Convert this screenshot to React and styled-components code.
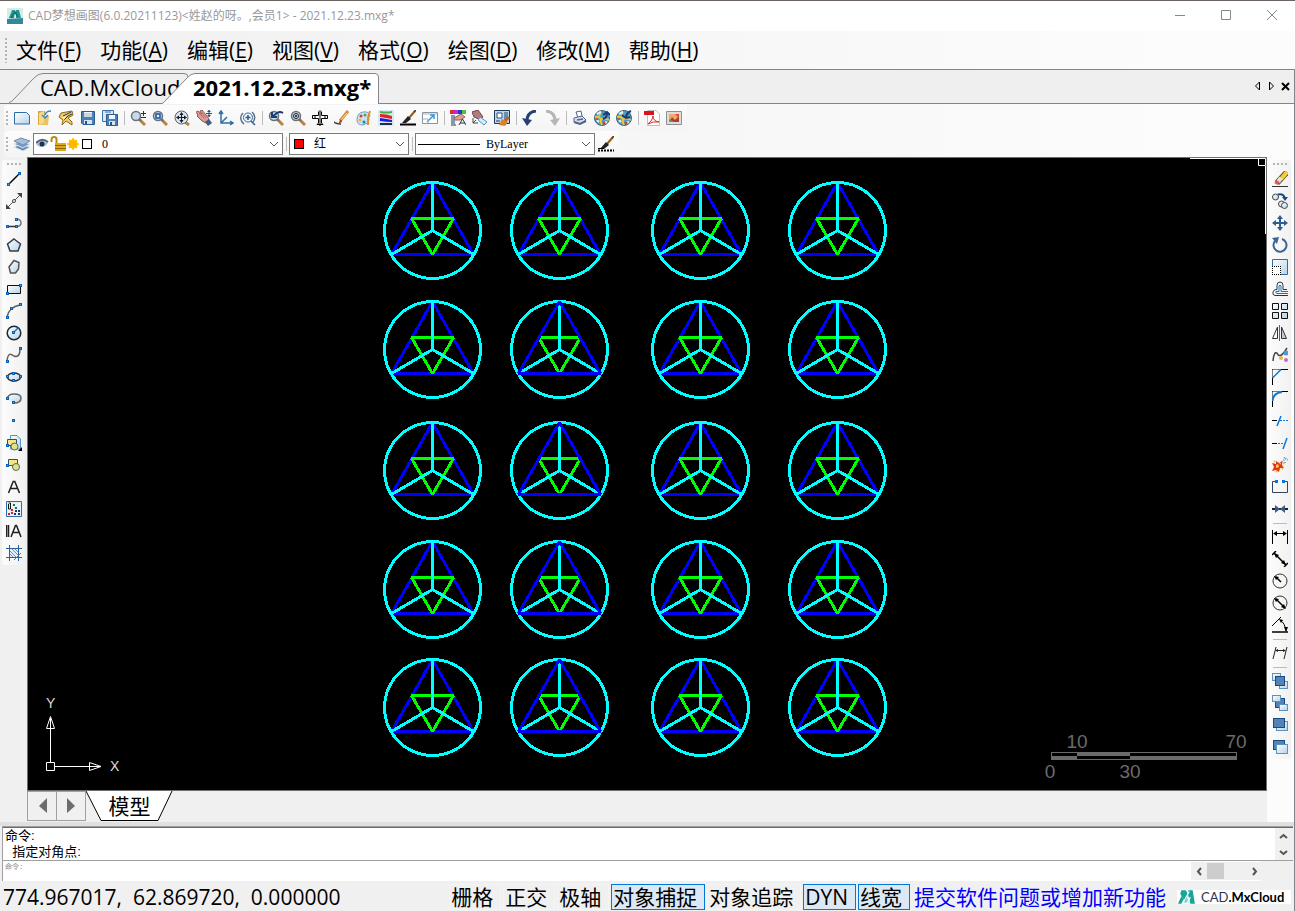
import React from "react";
import styled, { createGlobalStyle, css } from "styled-components";

const GlobalStyle = createGlobalStyle`
  * { box-sizing: border-box; }
  html, body, #root { height: 100%; }
  body {
    margin: 0;
    background: #f0f0f0;
    color: #000;
    font-family: "Open Sans", "Noto Sans CJK SC", sans-serif;
    text-spacing-trim: space-all;
  }
  button, input, select { font: inherit; color: inherit; }
`;

const buttonReset = css`
  margin: 0;
  padding: 0;
  border: 0;
  background: none;
`;

const Window = styled.div`
  display: flex;
  flex-direction: column;
  min-height: 100vh;
  border-top: 1px solid #6b6360;
`;

/* ---------- title bar ---------- */

const TitleBar = styled.header`
  display: flex;
  align-items: center;
  height: 30px;
  padding: 0 12px 0 7px;
  gap: 5px;
  background: #fff;
`;

const Title = styled.h1`
  flex: 1;
  margin: 0;
  font-size: 12px;
  font-weight: 400;
  line-height: 16px;
  color: #999;
  white-space: nowrap;
`;

const WindowControls = styled.div`
  display: flex;
  gap: 24px;
`;

const WindowButton = styled.button`
  ${buttonReset}
  display: flex;
  align-items: center;
  justify-content: center;
  width: 22px;
  height: 22px;
`;

/* ---------- menu ---------- */

const Grip = styled.span`
  flex: none;
  width: 7px;
  height: ${(p) => p.$size}px;
  background: radial-gradient(circle, #b4b4b4 1px, transparent 1px) 0 0 / 6px 4px repeat-y;
`;

const MenuBar = styled.nav`
  display: flex;
  align-items: center;
  height: 39px;
  padding-left: 3px;
  border-bottom: 1px solid #84848c;
  background: linear-gradient(90deg, #f0f0f0, #fcfcfc 92%);
`;

const MenuItem = styled.button`
  ${buttonReset}
  padding: 0 6px;
  font-size: 21px;
  line-height: 30px;
  white-space: nowrap;
`;

const MenuItems = styled.div`
  display: flex;
  gap: 7px;
`;

/* ---------- document tabs ---------- */

const Workspace = styled.div`
  flex: 1;
  display: flex;
  flex-direction: column;
  border-right: 1px solid #84848c;
`;

const TabBar = styled.div`
  display: flex;
  align-items: flex-end;
  height: 34px;
  padding-left: 9px;
  border-bottom: 1px solid #84848c;
  background: #efefef;
`;

const Tab = styled.button`
  ${buttonReset}
  position: relative;
  flex: none;
  width: ${(p) => p.$width}px;
  height: 31px;
  margin: 0 0 -1px ${(p) => (p.$active ? "-27px" : "0")};
  padding: 0 0 3px 31px;
  font-size: 22px;
  font-weight: ${(p) => (p.$active ? 700 : 400)};
  line-height: 28px;
  text-align: left;
  white-space: nowrap;
`;

const TabShape = styled.svg`
  position: absolute;
  inset: 0;
`;

const TabLabel = styled.span`
  position: relative;
`;

const TabNav = styled.div`
  display: flex;
  margin-left: auto;
  padding: 0 2px 10px 0;
`;

const TabNavButton = styled.button`
  ${buttonReset}
  display: flex;
  align-items: center;
  justify-content: center;
  width: 14px;
  height: 14px;
`;

/* ---------- toolbars ---------- */

const ToolbarDock = styled.div`
  padding-top: 1px;
  background: linear-gradient(90deg, #f0f0f0, #fcfcfc 92%);
`;

const Toolbar = styled.div`
  display: flex;
  align-items: center;
  width: max-content;
  height: 26px;
  margin-left: 4px;
  padding-right: 2px;
  border-radius: 3px;
  background: linear-gradient(180deg, #fcfcfc, #f4f4f4);
`;

const SideDock = styled.aside`
  padding: 3px ${(p) => (p.$right ? 3 : 2)}px 0 2px;
  background: ${(p) => (p.$right ? "#fcfcfc" : "#f0f0f0")};
`;

const SideToolbar = styled.div`
  display: flex;
  flex-direction: column;
  align-items: center;
  padding-bottom: 1px;
  border-radius: 3px;
  background: linear-gradient(90deg, #fcfcfc, #f1f1f1);
`;

const SideGrip = styled.span`
  width: 16px;
  height: 8px;
  background: radial-gradient(circle, #b4b4b4 1px, transparent 1px) 0 2px / 4px 4px repeat-x;
`;

const ToolButton = styled.button`
  ${buttonReset}
  display: flex;
  flex: none;
  align-items: center;
  justify-content: center;
  width: 22px;
  height: 22px;
  &:hover { background: #dbe9f6; }
`;

const Divider = styled.span`
  flex: none;
  display: flex;
  align-items: center;
  justify-content: center;
  width: ${(p) => (p.$horizontal ? 22 : 6)}px;
  height: ${(p) => (p.$horizontal ? 6 : 22)}px;
  &::after {
    content: "";
    width: ${(p) => (p.$horizontal ? 14 : 1)}px;
    height: ${(p) => (p.$horizontal ? 1 : 14)}px;
    background: #bcbcbc;
  }
`;

const Combo = styled.label`
  position: relative;
  display: flex;
  align-items: center;
  width: ${(p) => p.$width}px;
  height: 22px;
  border: 1px solid #7a7a7a;
  background: #fff;
`;

const ComboSelect = styled.select`
  appearance: none;
  width: 100%;
  height: 20px;
  padding: 0 20px 0 ${(p) => p.$indent}px;
  border: 0;
  border-radius: 0;
  outline: 0;
  background: transparent;
  font-family: "Liberation Serif", "Noto Sans CJK SC", serif;
  font-size: 12px;
`;

const ComboArt = styled.svg`
  position: absolute;
  left: 2px;
  pointer-events: none;
`;

const ComboArrow = styled.svg`
  position: absolute;
  right: 2px;
  pointer-events: none;
`;

/* ---------- drawing area ---------- */

const Main = styled.main`
  flex: 1;
  display: grid;
  grid-template-columns: 27px minmax(0, 1fr) 27px;
`;

const Center = styled.section`
  display: flex;
  flex-direction: column;
  min-width: 0;
`;

const Viewport = styled.div`
  position: relative;
  flex: 1;
  min-height: 480px;
  overflow: hidden;
  border: 1px solid #6e6e6e;
  background: #000;
`;

const Drawing = styled.svg`
  position: absolute;
  inset: 0;
  width: 100%;
  height: 100%;
`;

const UcsIcon = styled.svg`
  position: absolute;
  left: 17px;
  bottom: 10px;
`;

const ScaleBar = styled.svg`
  position: absolute;
  right: 17px;
  bottom: 5px;
`;

const CornerBox = styled.svg`
  position: absolute;
  top: 0;
  right: 0;
`;

const LayoutTabs = styled.div`
  display: flex;
  align-items: flex-start;
  height: 31px;
  background: #f0f0f0;
`;

const LayoutNavButton = styled.button`
  ${buttonReset}
  display: flex;
  align-items: center;
  justify-content: center;
  width: ${(p) => (p.$first ? 30 : 29)}px;
  height: 30px;
  border: 1px solid #a0a0a0;
  border-left-width: ${(p) => (p.$first ? 1 : 0)}px;
`;

const LayoutTab = styled.button`
  ${buttonReset}
  position: relative;
  width: 87px;
  height: 30px;
  font-size: 21px;
  line-height: 30px;
  text-align: center;
`;

/* ---------- command line ---------- */

const Splitter = styled.div`
  height: 4px;
  background: #e0e0e0;
`;

const CommandPanel = styled.section`
  margin: 0 1px 0 2px;
  border: 1px solid #a0a0a0;
  border-width: 1px 0 0 1px;
  font-family: "Liberation Mono", "Noto Sans CJK SC", monospace;
`;

const History = styled.div`
  display: flex;
  justify-content: space-between;
  height: 34px;
  border-top: 1px solid #696969;
  border-bottom: 1px solid #a0a0a0;
  background: #fff;
`;

const HistoryText = styled.div`
  padding-left: 2px;
  font-family: "Liberation Sans", "Noto Sans CJK SC", sans-serif;
  font-size: 13px;
  line-height: 16px;
  white-space: pre;
`;

const VerticalScroll = styled.div`
  display: flex;
  flex-direction: column;
  width: 18px;
  background: #f0f0f0;
`;

const HorizontalScroll = styled.div`
  display: flex;
  align-items: center;
  width: 71px;
  height: 18px;
  margin-right: 31px;
  background: #f0f0f0;
`;

const ScrollButton = styled.button`
  ${buttonReset}
  display: flex;
  align-items: center;
  justify-content: center;
  width: 16px;
  height: 16px;
`;

const ScrollThumb = styled.span`
  width: 17px;
  height: 16px;
  margin-right: auto;
  background: #cdcdcd;
`;

const CommandRow = styled.div`
  display: flex;
  align-items: center;
  height: 20px;
  background: linear-gradient(270deg, #f0f0f0 32px, #fff 32px);
`;

const CommandInput = styled.input`
  flex: 1;
  min-width: 0;
  height: 20px;
  padding: 0 0 10px 2px;
  border: 0;
  outline: 0;
  background: transparent;
  font-size: 7px;
  color: #8e8791;
`;

/* ---------- status bar ---------- */

const StatusBar = styled.footer`
  display: flex;
  align-items: center;
  gap: 2px;
  height: 30px;
  padding: 1px 3px 0 3px;
  background: #f0f0f0;
  font-size: 21px;
  line-height: 24px;
  white-space: nowrap;
`;

const Coordinates = styled.output`
  flex: 1;
  white-space: pre;
`;

const StatusToggle = styled.button`
  ${buttonReset}
  height: 26px;
  padding: 0 7px 0 1px;
  border: 1px solid ${(p) => (p.$on ? "#0078d7" : "#f4f4f4")};
  background: ${(p) => (p.$on ? "#dce9f5" : "transparent")};
`;

const StatusLink = styled.a`
  width: 263px;
  padding-left: 2px;
  color: #00f;
  text-decoration: none;
`;

const Brand = styled.div`
  display: flex;
  align-items: center;
  gap: 5px;
  width: 114px;
  height: 14px;
  padding-left: 1px;
  background: #fff;
  font-family: Lato, "Open Sans", sans-serif;
  font-size: 13px;
  font-weight: 700;
  line-height: 14px;
`;

const BrandPrefix = styled.span`
  color: #2c3556;
  font-weight: 400;
`;

/* ---------- icons ---------- */

const BLUE = "#0a78d6";
const STEEL = "#2f6da8";

const Node = ({ x, y }) => (
  <>
    <rect x={x - 1} y={y - 1} width="3" height="3" fill="#0a5fb4" />
    <rect x={x} y={y} width="1" height="1" fill="#35a4f4" />
  </>
);

const Lens = ({ x = 6, y = 6, children }) => (
  <>
    <path d={`M${x + 3} ${y + 3}l6 6`} stroke="#b98242" strokeWidth="3" />
    <path d={`M${x + 3} ${y + 3}l2 2`} stroke="#66707c" strokeWidth="2" />
    <circle cx={x} cy={y} r="4.5" fill="#c9d9e8" stroke="#68727e" strokeWidth="1.5" />
    {children}
  </>
);

const Brush = () => (
  <>
    <path d="M15 1L9 8" stroke="#9a5a1c" strokeWidth="2" />
    <path d="M14.500 .5l1 1" stroke="#5f300c" strokeWidth="3" />
    <path d="M8 6L11 9L6 13L2 13z" fill="#222" />
  </>
);

const Sheet = ({ x, y, w, h, front }) => (
  <rect x={x + 0.5} y={y + 0.5} width={w} height={h} fill={front ? "#5483b5" : "url(#paper)"} stroke={front ? "#174b83" : "#5b93bf"} />
);

const Globe = ({ children }) => (
  <>
    <circle cx="8" cy="8" r="7.5" fill="#4f9fc6" stroke="#37627e" />
    <path d="M1 7Q5 6 7 9Q6 12 8 15" stroke="#f3c72f" strokeWidth="2" />
    <path d="M7 9Q11 8 15 10M6 1Q7 4 5 6" stroke="#f3c72f" strokeWidth="1.5" />
    <path d="M3 4L7 2M10 13L13 12M3 10L5 12" stroke="#e3f0f4" strokeWidth="2" />
    <circle cx="10" cy="13" r="1.5" fill="#dc3c1e" />
    <circle cx="3" cy="9" r="1" fill="#dc3c1e" />
    {children}
  </>
);

const ICONS = {
  new: <path d="M.5 2.500H12.500L15.500 5.500V14H.5z" fill="url(#paper)" stroke={STEEL} />,
  open: (
    <>
      <path d="M2 1H9V15H2z" fill="#d9a441" />
      <path d="M3 3L8 1V14L3 15z" fill="#f8d98a" />
      <path d="M8 6H13L12 15H5L8 12z" fill="#edc063" />
      <path d="M15 1Q10 1 9 5M6 5L9 8L12 5" stroke="#2f8bd6" strokeWidth="1.500" />
    </>
  ),
  openCloud: (
    <>
      <path d="M3 3L14 1L15 5L10 8L14 12L14 15L8 11L4 15L5 10L1 7z" fill="#f0c964" stroke="#8a6a24" />
      <path d="M5 6L13 2M6 10L10 6L14 4" stroke="#1c3b6b" />
      <path d="M4 7L8 6L6 10z" fill="#fbeeb8" />
    </>
  ),
  save: (
    <>
      <path d="M1.500 1.500H14.500V14.500H3L1.500 13z" fill="#4f80b5" stroke="#2c5b92" />
      <path d="M4 2H12V7H4z" fill="#eef5fb" />
      <path d="M4 4H12M4 6H12" stroke="#9cb9d3" />
      <path d="M4 10H12V14H4z" fill="#d6e3ef" />
      <path d="M5 11H7V14H5z" fill="#24548a" />
    </>
  ),
  saveAs: (
    <>
      <path d="M.5 .5H11.500V11.500H.5z" fill="#dbe8f4" stroke="#3b71a8" />
      <path d="M4.500 4.500H15.500V15.500H4.500z" fill="#4f80b5" stroke="#2c5b92" />
      <path d="M7 5H13V9H7z" fill="#eef5fb" />
      <path d="M7 11H13V15H7z" fill="#d6e3ef" />
      <path d="M8 12H10V15H8z" fill="#24548a" />
      <path d="M3 2H9" stroke="#3b71a8" />
    </>
  ),
  zoom: (
    <>
      <Lens />
      <path d="M11 3.500H16M13.500 1V6M11 7.500H16" stroke="#24344c" />
    </>
  ),
  zoomWindow: <Lens><rect x="4" y="4" width="4" height="4" fill="#dbeeff" stroke="#1a5599" strokeWidth="1.5" /></Lens>,
  zoomExtents: (
    <>
      <path d="M11 12L15 15" stroke="#b98242" strokeWidth="3" />
      <circle cx="7.500" cy="7.500" r="6.500" fill="#dce5ec" stroke="#59636c" />
      <path d="M7.500 3V12M3 7.500H12" stroke="#121a22" />
      <path d="M7.500 2L9.500 5H5.500zM7.500 13L5.500 10H9.500zM2 7.500L5 5.500V9.500zM13 7.500L10 9.500V5.500z" fill="#121a22" />
    </>
  ),
  pan: (
    <>
      <path d="M0 2L2 1L6 4L4 1L6 0L10 5L13 9L10 13L6 11L1 6L2 5z" fill="#d99b91" stroke="#9d5751" />
      <path d="M3 3L8 8M6 3L10 8" stroke="#b3716a" />
      <path d="M9 12L13 9L16 13L12 16z" fill="#3a5d8c" />
      <path d="M13 0V7M10 3.500H16" stroke="#2a4f7d" />
      <path d="M13 0L15 2H11zM13 7L11 5H15z" fill="#2a4f7d" />
    </>
  ),
  axes: (
    <path d="M3 2V13H14M1 4L3 1L5 4M12 11L15 13L12 15M3 13L9 7" stroke={STEEL} strokeWidth="1.500" />
  ),
  orbit: (
    <>
      <path d="M4 14A7 7 0 0 1 3 3M12 2A7 7 0 0 1 13 12" stroke="#55718f" strokeWidth="1.5" />
      <circle cx="8" cy="7.500" r="4.500" fill="#eef5fb" stroke="#44678e" />
      <path d="M8 5V10M5.500 7.500H10.500M11 11L15 15" stroke="#2b5b92" strokeWidth="1.500" />
    </>
  ),
  zoomPrevious: (
    <>
      <Lens />
      <path d="M4 7L9 3Q12 1 15 3M4 2V7H9" stroke="#1d3c73" strokeWidth="2" />
    </>
  ),
  zoomCenter: (
    <Lens>
      <circle cx="6" cy="6" r="2.500" stroke="#222" />
      <circle cx="6" cy="6" r="1" fill="#111" />
    </Lens>
  ),
  aerial: (
    <>
      <path d="M8 .5L9.500 2V5.500H15.500V8.500H9.500V13L11 14.500H5L6.500 13V8.500H.5V5.500H6.500V2z" fill="#fff" stroke="#000" />
      <path d="M8 2V16M3 5V9M13 5V9" stroke="#000" />
    </>
  ),
  draw: (
    <>
      <path d="M0 12Q2 14 7 14" stroke="#333" strokeWidth="1.500" />
      <path d="M14 1L6 11" stroke="#d98d32" strokeWidth="3" />
      <path d="M13 3L7 10" stroke="#ffe09a" />
      <path d="M7 9L4 14L8 12z" fill="#a53823" />
    </>
  ),
  palette: (
    <>
      <path d="M1 10Q1 3 7 2Q13 1 14 6Q12 7 13 10Q12 14 7 15Q1 15 1 10z" fill="#cce3ef" stroke="#69a2c5" />
      <circle cx="5" cy="6" r="1.500" fill="#d53d33" />
      <circle cx="9" cy="5" r="1.500" fill="#57a24a" />
      <circle cx="4" cy="10" r="1.500" fill="#eeb825" />
      <circle cx="8" cy="12" r="1.500" fill="#287ac0" />
      <path d="M14 1L12 8V15" stroke="#dc8e39" strokeWidth="2" />
    </>
  ),
  layersColor: (
    <>
      <path d="M0 0H16V16H0z" fill="#d6e8f4" />
      <path d="M2 1Q9 2 14 1V3Q8 4 2 3z" fill="#3cb54a" />
      <path d="M2 4Q9 4 14 6V9Q8 8 2 7z" fill="#e52323" />
      <path d="M2 8Q9 9 14 10V12Q8 12 2 11z" fill="#1620d8" />
      <path d="M2 13Q9 13 14 13V15H2z" fill="#1a2c57" />
    </>
  ),
  linetype: (
    <>
      <Brush />
      <path d="M0 14.500H16" stroke="#000" strokeWidth="2" />
    </>
  ),
  viewport: (
    <>
      <path d="M.5 2.500H15.500V13.500H.5z" fill="#fff" stroke="#87939e" />
      <path d="M1 4H15" stroke="#a9b4bd" />
      <path d="M5 12L12 5M8 5H12V9" stroke="#2f9be0" strokeWidth="1.500" />
      <path d="M1 9H6V13" stroke="#a9b4bd" />
    </>
  ),
  colorPick: (
    <>
      <path d="M0 0H4V4H0z" fill="#e82a2a" />
      <path d="M4 0H8V4H4z" fill="#c328d7" />
      <path d="M8 0H12V4H8z" fill="#2934df" />
      <path d="M12 0H16V4H12z" fill="#49c638" />
      <path d="M1 5H5V14H1z" fill="#7e9bb5" />
      <path d="M4 8L11 4L15 7L10 10L5 10z" fill="#dba28f" stroke="#945f54" />
      <path d="M9 15L12.500 9L16 15M10 13H15" stroke="#24384d" />
      <path d="M1 15H6" stroke="#24384d" />
    </>
  ),
  matchProps: (
    <>
      <path d="M0 2L6 0L11 7L7 9L2 7z" fill="#b17c79" stroke="#6f474c" />
      <path d="M8 7L15 12L12 15L6 10z" fill="#d7ebf8" stroke="#5b93bf" />
      <path d="M1 8V13H6M1 13L4 10" stroke="#444" />
    </>
  ),
  block: (
    <>
      <path d="M.5 .5H15.500V13.500H.5z" fill="#c3d6e8" stroke="#19395f" />
      <path d="M3 3H8V8H3z" fill="#fff" stroke="#24548a" />
      <path d="M10 2H14V10H10z" fill="#6c8cb0" />
      <path d="M15 7L10 12" stroke="#b56a22" strokeWidth="3" />
      <path d="M8 9L14 12L11 16L5 15z" fill="#d9822b" />
      <path d="M2 11H6" stroke="#19395f" />
    </>
  ),
  undo: (
    <>
      <path d="M14 1Q5 2 5 11" stroke="#23426f" strokeWidth="3" />
      <path d="M0 8L10 10L5 16z" fill="#23426f" />
    </>
  ),
  redo: (
    <>
      <path d="M2 1Q11 2 11 11" stroke="#b5b5b5" strokeWidth="3" />
      <path d="M16 8L6 10L11 16z" fill="#b5b5b5" />
    </>
  ),
  print: (
    <>
      <path d="M4 2L9 1L10 6L6 8z" fill="#fff" stroke="#52658f" />
      <path d="M2 8L10 6L14 10L8 14L2 12z" fill="#d9dfec" stroke="#52658f" />
      <path d="M5 10L11 9" stroke="#52658f" strokeWidth="1.500" />
      <path d="M2 12L8 14L14 11" stroke="#52658f" strokeWidth="2" />
    </>
  ),
  publish: <Globe><path d="M9 9Q13 8 13 3M9 5L13 2L16 5" stroke="#1d3c73" strokeWidth="2" /></Globe>,
  download: <Globe><path d="M15 1Q10 3 10 8M6 5L10 8L14 7" stroke="#1d3c73" strokeWidth="2" /></Globe>,
  pdf: (
    <>
      <path d="M3.500 .5H12L15.500 4V15.500H3.500z" fill="#fff" stroke="#bfbfbf" />
      <path d="M0 1H10V5H0z" fill="#d9141d" />
      <path d="M4 14Q9 10 9 6Q9 11 15 12Q9 11 4 14" stroke="#dd2c2c" />
    </>
  ),
  image: (
    <>
      <path d="M.5 1.500H15.500V14.500H.5z" fill="#dedede" stroke="#8f8f8f" />
      <path d="M3 4H13V12H3z" fill="#f3a76c" />
      <path d="M3 12L6 7L9 10L13 6V12z" fill="#a5442d" />
      <path d="M3 9L8 12H3z" fill="#6b9c3c" />
      <path d="M9 4L13 4V8z" fill="#e4492f" />
    </>
  ),
  layers: (
    <>
      <path d="M0 11L7 8L16 11L9 15z" fill="#6187b0" stroke="#dbe7f2" />
      <path d="M0 8L7 5L16 8L9 12z" fill="#7b9dc0" stroke="#dbe7f2" />
      <path d="M0 5L7 2L16 5L9 9z" fill="#a7bed5" stroke="#6d8fb3" />
    </>
  ),
  lineweight: (
    <>
      <Brush />
      <path d="M0 12.500H6" stroke="#000" />
      <path d="M0 14.500H16" stroke="#000" strokeWidth="2" strokeDasharray="2 1" />
    </>
  ),

  line: (<><path d="M2 14L14 2" stroke="#000" strokeWidth="1.500" /><Node x={2} y={13} /><Node x={13} y={2} /></>),
  xline: (
    <>
      <path d="M2 14L14 2" stroke="#555" />
      <path d="M0 16V11L5 16zM16 0V5L11 0z" fill="#444" />
      <circle cx="8" cy="8" r="1.500" fill="#fff" stroke="#444" />
    </>
  ),
  polyline: (
    <>
      <path d="M1 11.500H11" stroke="#333" strokeWidth="1.500" />
      <path d="M10 4Q15 4 15 8Q15 11 11 11.500" stroke="#777" strokeWidth="1.500" />
      <Node x={1} y={11} /><Node x={10} y={11} /><Node x={10} y={4} />
    </>
  ),
  pentagon: <path d="M8 2L14.500 7L12 14H4L1.500 7z" fill="url(#paper)" stroke="#333e49" strokeWidth="1.500" />,
  revision: <path d="M8 1.500L13 3.500L12.500 10L9.500 14H4.500L3 8z" fill="url(#paper)" stroke="#555" strokeWidth="1.500" />,
  rectangle: (<><path d="M1.500 4.500H14.500V12.500H1.500z" fill="url(#paper)" stroke="#111" /><Node x={14} y={4} /><Node x={1} y={12} /></>),
  arc: (<><path d="M1 14Q3 4 14 2" stroke="#665f55" strokeWidth="1.500" /><Node x={1} y={14} /><Node x={5} y={5} /><Node x={14} y={1} /></>),
  circle: (
    <>
      <circle cx="8" cy="8" r="6.800" fill="url(#paper)" stroke="#1d2833" strokeWidth="1.500" />
      <path d="M7 8L12 3" stroke={BLUE} strokeWidth="1.500" /><Node x={7} y={7} />
    </>
  ),
  spline: (<><path d="M1 14C2 5 5 7 8 9C13 11 14 6 14 2" stroke="#665f55" strokeWidth="1.500" /><Node x={1} y={14} /><Node x={14} y={1} /></>),
  ellipse: (
    <>
      <ellipse cx="8" cy="8" rx="6.500" ry="4" fill="url(#paper)" stroke="#26323d" strokeWidth="1.500" />
      <Node x={1} y={7} /><Node x={14} y={7} /><Node x={7} y={4} /><Node x={7} y={11} />
    </>
  ),
  ellipseArc: (
    <>
      <path d="M1 8Q2 3 8 3Q15 3 15 7Q15 12 8 12" fill="url(#paper)" stroke="#666" strokeWidth="1.500" />
      <Node x={1} y={7} /><Node x={7} y={11} />
    </>
  ),
  point: <Node x={7} y={7} />,
  insertBlock: (
    <>
      <path d="M4.500 .5H11L14.500 4V14H4.500z" fill="url(#paper)" stroke="#5b93bf" />
      <path d="M1.500 4.500H10.500V10.500H1.500z" fill="#f7e681" stroke="#27517b" />
      <circle cx="8.500" cy="11.500" r="3.500" fill="#e7df80" stroke="#4d6c71" />
      <Node x={1} y={10} /><path d="M16 12V16H12z" fill="#000" />
    </>
  ),
  makeBlock: (
    <>
      <path d="M2.500 2.500H11.500V8.500H2.500z" fill="#f7e681" stroke="#27517b" />
      <circle cx="10" cy="10" r="3.500" fill="#e7df80" stroke="#4d6c71" />
      <Node x={1} y={8} />
    </>
  ),
  text: <path d="M2.500 14L7.200 2.500H8.800L13.500 14M4.500 9.500H11.500" stroke="#202020" strokeWidth="1.500" />,
  hatch: (
    <>
      <path d="M.5 .5H15.500V15.500H.5z" fill="#e8f1f9" stroke={STEEL} />
      <path d="M2.500 3V8H4.500V2H2.500" stroke="#111" />
      <path d="M7 3H9V5H7zM9 6H11V8H9z" fill="#187b35" />
      <path d="M5 8H7V10H5zM5 11H7V13H5zM2 12H4V14H2z" fill="#d92222" />
      <path d="M9 9H11V11H9zM12 9H14V11H12zM12 12H14V14H12zM8 12H10V14H8z" fill="#1f357b" />
    </>
  ),
  mtext: <path d="M.5 2V14M2.500 2V14M5 14L9.500 2.500H10.500L15 14M6.500 9.500H13.500" stroke="#202020" strokeWidth="1.500" />,
  table: (
    <>
      <path d="M4 4H13V13H4z" fill="#e0edf7" />
      <path d="M4 6L11 13M4 9L8 13M6 4L13 11M9 4L13 8" stroke="#6a94bb" />
      <path d="M0 3.500H16M0 12.500H16M3.500 0V16M12.500 0V16" stroke="#285f96" />
      <path d="M8 15L15 8" stroke="#3d78ad" />
    </>
  ),

  erase: (
    <>
      <path d="M0 15.500H16" stroke="#333" />
      <path d="M15 1L5 12" stroke="#6e5a24" strokeWidth="6" />
      <path d="M15 1L9 8" stroke="#f4cf39" strokeWidth="4" />
      <path d="M9 7L6 11" stroke="#dbe7ef" strokeWidth="4" />
      <path d="M6 10L4 13" stroke="#e0584f" strokeWidth="4" />
    </>
  ),
  copy: (
    <>
      <circle cx="3.500" cy="4" r="3" fill="url(#paper)" stroke="#444" />
      <circle cx="9.500" cy="11" r="3" fill="url(#paper)" stroke="#444" />
      <circle cx="12.500" cy="12.500" r="3" fill="url(#paper)" stroke="#444" />
      <path d="M6 1.500Q11 0 13 5" stroke="#184c86" strokeWidth="2" /><path d="M10 4H16L13 8z" fill="#184c86" />
    </>
  ),
  move: (
    <>
      <path d="M8 2V14M2 8H14" stroke="#2d5d91" strokeWidth="2" />
      <path d="M8 0L11 4H5zM8 16L5 12H11zM0 8L4 5V11zM16 8L12 11V5z" fill="#2d5d91" />
    </>
  ),
  rotate: (<><path d="M10 2A6.500 6.500 0 1 1 3 4" stroke="#3c6794" strokeWidth="2" /><path d="M0 1L7 0L5 7z" fill="#3c6794" /></>),
  scale: (
    <>
      <path d="M.5 .5H15.500V15.500H.5z" fill="url(#paper)" stroke="#2f6da8" />
      <path d="M0 7H9V16H0z" fill="#fff" />
      <path d="M0 7.500H9M8.500 7V16M.5 7V16M0 15.500H9" stroke="#000" strokeDasharray="1 1" />
    </>
  ),
  offset: (
    <>
      <path d="M16 14.500H3Q0 14 1 11Q2 8 5 8.500V4.500Q5 1 8 1Q11 1 11 4.500V8.500H15" stroke="#333" />
      <path d="M16 12.500H5Q3 12 4 10.500H7V5Q8 3 9 5V10.500H16" stroke={BLUE} />
    </>
  ),
  array: <path d="M.5 .5H6.500V6.500H.5zM9.500 .5H15.500V6.500H9.500zM.5 9.500H6.500V15.500H.5zM9.500 9.500H15.500V15.500H9.500z" fill="url(#paper)" stroke="#111" />,
  mirror: (
    <>
      <path d="M5.500 2V13.500H.5z" fill="#fff" stroke="#333" />
      <path d="M9.500 2V13.500H14.500z" fill="#c3ccd3" stroke="#333" />
      <path d="M7.500 0V16" stroke={BLUE} />
    </>
  ),
  editSpline: (
    <>
      <path d="M1 14Q2 4 5 6Q8 13 15 1" stroke="#444" strokeWidth="1.500" />
      <circle cx="14" cy="6" r="2.500" fill="#4e98d7" /><circle cx="9" cy="11" r="2" fill="#e2b844" /><circle cx="14" cy="13" r="2" fill="#cf64cf" />
    </>
  ),
  chamfer: (
    <>
      <path d="M.5 .5H9M.5 .5V9" stroke="#000" strokeDasharray="1 1" />
      <path d="M9 .5H16M.5 9V16" stroke="#000" /><path d="M.5 9L9 .5" stroke={BLUE} strokeWidth="1.500" />
    </>
  ),
  fillet: (
    <>
      <path d="M.5 .5H9M.5 .5V9" stroke="#000" strokeDasharray="1 1" />
      <path d="M9 .5H16M.5 9V16" stroke="#000" /><path d="M.5 10Q1 2 10 1" stroke={BLUE} strokeWidth="2" />
    </>
  ),
  trim: (<><path d="M0 7.500H5" stroke="#000" /><path d="M5 13L9 3" stroke={BLUE} strokeWidth="1.500" /><path d="M8 7.500H16" stroke={BLUE} strokeDasharray="2 1" /></>),
  extend: (<><path d="M0 8.500H5" stroke="#000" /><path d="M6 8.500H11" stroke={BLUE} strokeDasharray="2 1" /><path d="M11 14L15 3" stroke={BLUE} strokeWidth="1.500" /></>),
  explode: (
    <>
      <path d="M0 6L4 7L4 4L7 6L10 4L10 8L12 11L8 11L7 15L4 13L0 14L2 10z" fill="#e63419" />
      <path d="M4 8L6 7L7 10L4 11zM7 5L9 6L8 8z" fill="#ffdc3e" />
      <path d="M2 4L3 5M10 11L11 12M4 15L5 14M11 7L12 6" stroke="#f0b421" strokeWidth="2" />
      <path d="M10 5L14 1M12 0L16 3M13 5V7" stroke="#8ba0b4" strokeDasharray="1 1" strokeWidth="2" />
    </>
  ),
  break: (<><path d="M4 2.500H.5V13.500H15.500V2.500H12" stroke="#33475c" /><path d="M3 1H6V4H3zM10 1H13V4H10z" fill={BLUE} /></>),
  join: (<><path d="M0 8H16" stroke="#17212b" strokeWidth="2" /><path d="M3 4L8 8L3 12zM13 4L8 8L13 12z" fill="#3c5c80" /></>),
  dimLinear: (<><path d="M.5 1V15M15.500 1V15M2 4.500H14" stroke="#000" /><path d="M1 4.500L5 2V7zM15 4.500L11 2V7z" fill="#000" /></>),
  dimAligned: (<><path d="M0 4L4 0M12 16L16 12M2 2L14 14" stroke="#000" strokeWidth="1.500" /><path d="M2 2L7 4L4 7zM14 14L9 12L12 9z" fill="#000" /></>),
  dimRadius: (<><circle cx="8" cy="8" r="7" stroke="#333" /><path d="M4 4L9 9" stroke="#000" strokeWidth="1.500" /><path d="M2 3L7 4L4 7z" fill="#000" /></>),
  dimDiameter: (<><circle cx="8" cy="8" r="7" stroke="#333" /><path d="M4 4L12 12" stroke="#000" strokeWidth="1.500" /><path d="M2 3L7 4L4 7zM14 14L9 12L12 9z" fill="#000" /></>),
  dimAngular: (<><path d="M0 15H16" stroke="#000" strokeWidth="1.500" /><path d="M0 9L9 0M8 3Q13 6 14 14" stroke="#000" /><path d="M7 2L11 3L9 6zM12 10H16L14 15z" fill="#000" /></>),
  dimJog: (<><path d="M4 2L1 14M12 14L15 2M4 5.500H13" stroke="#222" /><path d="M3 5.500L6 4V7zM14 5.500L11 4V7z" fill="#222" /></>),
  bringFront: (<><Sheet x={0} y={0} w={8} h={7} /><Sheet x={7} y={8} w={8} h={7} /><Sheet x={3} y={3} w={9} h={9} front /></>),
  sendBack: (<><Sheet x={3} y={3} w={9} h={9} front /><Sheet x={0} y={0} w={8} h={6} /><Sheet x={7} y={9} w={8} h={6} /></>),
  bringAbove: (<><Sheet x={4} y={4} w={11} h={9} /><Sheet x={1} y={1} w={11} h={9} front /></>),
  sendUnder: (<><Sheet x={1} y={1} w={11} h={9} front /><Sheet x={4} y={5} w={11} h={9} /></>),
};

const Icon = ({ name }) => (
  <svg width="16" height="16" viewBox="0 0 16 16" fill="none" aria-hidden="true">{ICONS[name]}</svg>
);

const Logo = ({ size, color = "#16a596" }) => (
  <svg width={size} height={size} viewBox="0 0 16 16" aria-hidden="true">
    <path d="M3 2H7L9 6L6 12L2 5z" fill={color} />
    <path d="M9 2H13L15 14H11L9 6z" fill={color} />
    <path d="M3 7L5 10L3 14H0z" fill={color} />
    <path d="M8 8L10 13H5z" fill={color} opacity="0.5" />
    <path d="M4 14L10 3M8 14L11 8" stroke="#fff" strokeWidth="1" fill="none" />
  </svg>
);

const AppIcon = () => (
  <svg width="16" height="16" viewBox="0 0 16 16" aria-hidden="true">
    <rect width="16" height="16" rx="1" fill="#d8ebe9" />
    <path d="M0 11L16 10V16H0z" fill="#32879b" />
    <path d="M5 2H8L7 10H2zM9 2H12L14 10H9z" fill="#1b9c91" />
    <path d="M4 10L8 4L11 9" stroke="#0e746d" strokeWidth="1.500" fill="none" />
  </svg>
);

const Chevron = ({ d }) => (
  <svg width="9" height="9" viewBox="0 0 9 9" fill="none" aria-hidden="true">
    <path d={d} stroke="#555" strokeWidth="2" />
  </svg>
);

/* ---------- data ---------- */

const MENUS = [
  ["文件", "F"], ["功能", "A"], ["编辑", "E"], ["视图", "V"],
  ["格式", "O"], ["绘图", "D"], ["修改", "M"], ["帮助", "H"],
];

const STANDARD_TOOLS = [
  "new", "open", "openCloud", "save", "saveAs", null,
  "zoom", "zoomWindow", "zoomExtents", "pan", "axes", "orbit", null,
  "zoomPrevious", "zoomCenter", "aerial", "draw", "palette", "layersColor", "linetype", "viewport", null,
  "colorPick", "matchProps", "block", null,
  "undo", "redo", null,
  "print", "publish", "download", null,
  "pdf", "image",
];

const DRAW_TOOLS = [
  "line", "xline", "polyline", "pentagon", "revision", "rectangle", "arc", "circle", "spline",
  "ellipse", "ellipseArc", "point", "insertBlock", "makeBlock", "text", "hatch", "mtext", "table",
];

const MODIFY_TOOLS = [
  "erase", "copy", "move", "rotate", "scale", "offset", "array", "mirror", "editSpline",
  "chamfer", "fillet", "trim", "extend", "explode", "break", "join", null,
  "dimLinear", "dimAligned", "dimRadius", "dimDiameter", "dimAngular", null,
  "dimJog", null,
  "bringFront", "sendBack", "bringAbove", "sendUnder",
];

const COLUMNS = [404.5, 531.5, 672.5, 809.5];
const ROWS = [72.5, 191.5, 312.5, 431.5, 549.5];

const TOGGLES = [
  ["栅格", false], ["正交", false], ["极轴", false], ["对象捕捉", true],
  ["对象追踪", false], ["DYN", true], ["线宽", true],
];

const Tools = ({ items, horizontal }) =>
  items.map((name, i) =>
    name ? (
      <ToolButton key={name} type="button" aria-label={name}><Icon name={name} /></ToolButton>
    ) : (
      <Divider key={i} $horizontal={horizontal} />
    )
  );

const RING = Array.from({ length: 40 }, (_, i) => {
  const angle = (i * Math.PI) / 20;
  return `${(48 * Math.sin(angle)).toFixed(1)},${(-48 * Math.cos(angle)).toFixed(1)}`;
}).join(" ");

const Emblem = ({ x, y, blueOnTop }) => {
  const triangle = <path d="M0 -48L41 24H-41z" stroke="#00f" strokeLinejoin="bevel" />;
  return (
    <g transform={`translate(${x} ${y})`}>
      {!blueOnTop && triangle}
      <path d="M-21 -12H21L0 24z" stroke="#0f0" strokeLinejoin="bevel" />
      <polygon points={RING} stroke="#0ff" />
      <path d="M0 -48V0M-41 24L0 0L41 24" stroke="#0ff" />
      {blueOnTop && triangle}
    </g>
  );
};

const ArrowDown = () => (
  <ComboArrow width="12" height="8" viewBox="0 0 12 8" fill="none">
    <path d="M2 2L6 6L10 2" stroke="#555" />
  </ComboArrow>
);

export default function App() {
  return (
    <Window>
      <GlobalStyle />
      <svg width="0" height="0" style={{ position: "absolute" }} aria-hidden="true">
        <defs>
          <linearGradient id="paper" x1="0" y1="0" x2="1" y2="1">
            <stop offset="0" stopColor="#fff" />
            <stop offset="1" stopColor="#b6d2e8" />
          </linearGradient>
        </defs>
      </svg>

      <TitleBar>
        <AppIcon />
        <Title>CAD梦想画图(6.0.20211123)&lt;姓赵的呀。,会员1&gt; - 2021.12.23.mxg*</Title>
        <WindowControls>
          <WindowButton type="button" aria-label="最小化">
            <svg width="12" height="12" fill="none"><path d="M1 5.500H11" stroke="#888" /></svg>
          </WindowButton>
          <WindowButton type="button" aria-label="最大化">
            <svg width="12" height="12" fill="none"><path d="M1.500 .5H10.500V9.500H1.500z" stroke="#888" /></svg>
          </WindowButton>
          <WindowButton type="button" aria-label="关闭">
            <svg width="12" height="12" fill="none"><path d="M1 0L11 10M11 0L1 10" stroke="#888" /></svg>
          </WindowButton>
        </WindowControls>
      </TitleBar>

      <MenuBar>
        <Grip $size={26} />
        <MenuItems>
          {MENUS.map(([label, key]) => (
            <MenuItem key={key} type="button">{label}(<u>{key}</u>)</MenuItem>
          ))}
        </MenuItems>
      </MenuBar>

      <Workspace>
        <TabBar>
          <Tab type="button" $width={180}>
            <TabShape width="180" height="31" fill="none">
              <path d="M0 29.500Q3 29 5 26L25 5Q29 .5 34 .5H175Q179 .5 179 4" stroke="#84848c" />
            </TabShape>
            <TabLabel>CAD.MxCloud</TabLabel>
          </Tab>
          <Tab type="button" $active $width={217}>
            <TabShape width="217" height="31">
              <path d="M0 30.500Q2 30 4 27L25 5Q29 .5 33 .5H213Q216.500 .5 216.500 4V31H0z" fill="#fff" />
              <path d="M0 30.500Q2 30 4 27L25 5Q29 .5 33 .5H213Q216.500 .5 216.500 4V31" fill="none" stroke="#84848c" />
            </TabShape>
            <TabLabel>2021.12.23.mxg*</TabLabel>
          </Tab>
          <TabNav>
            <TabNavButton type="button" aria-label="上一个">
              <svg width="8" height="10" fill="none"><path d="M6.500 1V9L2.500 5z" stroke="#000" /></svg>
            </TabNavButton>
            <TabNavButton type="button" aria-label="下一个">
              <svg width="8" height="10" fill="none"><path d="M2.500 1V9L6.500 5z" stroke="#000" /></svg>
            </TabNavButton>
            <TabNavButton type="button" aria-label="关闭标签">
              <svg width="9" height="10" fill="none"><path d="M1 2L8 9M8 2L1 9" stroke="#000" strokeWidth="2" /></svg>
            </TabNavButton>
          </TabNav>
        </TabBar>

        <ToolbarDock>
          <Toolbar>
            <Grip $size={16} />
            <Tools items={STANDARD_TOOLS} />
          </Toolbar>
          <Toolbar>
            <Grip $size={16} />
            <Tools items={["layers"]} />
            <Combo $width={250}>
              <ComboArt width="60" height="18" viewBox="0 0 60 18" fill="none">
                <path d="M0 9Q6 3 12 8Q8 14 2 11z" fill="#a9c0d4" />
                <path d="M0 8Q6 2 12 7" stroke="#53677c" strokeWidth="2" />
                <circle cx="6" cy="9" r="2.500" fill="#1d324b" />
                <path d="M15.500 7V4Q16 2 18 2Q20.500 2 20.500 4V8" stroke="#b88a13" strokeWidth="2" />
                <path d="M19 8H30V16H19z" fill="#e0a818" />
                <path d="M19 10.500H30M19 13.500H30" stroke="#8c650a" />
                <path d="M37 3V15M31 9H43M33 5L41 13M41 5L33 13" stroke="#ffd21c" strokeWidth="2" />
                <circle cx="37" cy="9" r="4.500" fill="#fdb900" />
                <rect x="46.500" y="4.500" width="9" height="9" fill="#fff" stroke="#000" />
              </ComboArt>
              <ComboSelect $indent={68} aria-label="图层"><option>0</option></ComboSelect>
              <ArrowDown />
            </Combo>
            <Divider />
            <Combo $width={120}>
              <ComboArt width="14" height="18" viewBox="0 0 14 18">
                <rect x="2.500" y="4.500" width="9" height="9" fill="#f00" stroke="#000" />
              </ComboArt>
              <ComboSelect $indent={24} aria-label="颜色"><option>红</option></ComboSelect>
              <ArrowDown />
            </Combo>
            <Divider />
            <Combo $width={180}>
              <ComboArt width="64" height="18" viewBox="0 0 64 18">
                <path d="M0 9.500H62" stroke="#000" />
              </ComboArt>
              <ComboSelect $indent={70} aria-label="线型"><option>ByLayer</option></ComboSelect>
              <ArrowDown />
            </Combo>
            <Tools items={["lineweight"]} />
          </Toolbar>
        </ToolbarDock>

        <Main>
          <SideDock>
            <SideToolbar>
              <SideGrip />
              <Tools items={DRAW_TOOLS} horizontal />
            </SideToolbar>
          </SideDock>

          <Center>
            <Viewport>
              <Drawing fill="none" strokeWidth="3" shapeRendering="crispEdges">
                {ROWS.map((y, r) =>
                  COLUMNS.map((x, c) => (
                    <Emblem key={`${r}-${c}`} x={x} y={y} blueOnTop={c === 1 && r > 0} />
                  ))
                )}
              </Drawing>
              <UcsIcon width="90" height="86" fill="none" stroke="#fff">
                <path d="M1.500 68.500H9.500V76.500H1.500zM5.500 68V34M10 72.500H44" />
                <path d="M5.500 22.500L9.500 34.500H1.500zM5.500 24V34M56 72.500L44.500 68.500V76.500zM44 72.500H55" />
                <text x="1" y="14" fontFamily="Liberation Sans" fontSize="14" fill="#ddd" stroke="none">Y</text>
                <text x="65" y="77" fontFamily="Liberation Sans" fontSize="14" fill="#ddd" stroke="none">X</text>
              </UcsIcon>
              <ScaleBar width="210" height="54" fill="#6b6b6b" fontFamily="Liberation Sans" fontSize="19" textAnchor="middle">
                <text x="38" y="17">10</text>
                <text x="197" y="17">70</text>
                <text x="11" y="47">0</text>
                <text x="91" y="47">30</text>
                <path d="M12 21H198V29H12z" />
                <path d="M13 22H38V25H13zM91 22H197V25H91zM38 25H91V28H38z" fill="#000" />
              </ScaleBar>
              <CornerBox width="78" height="78" fill="none" stroke="#fff">
                <path d="M2 .5H71M77.500 8V76M70.500 .5H77.500V7.500H70.500z" />
              </CornerBox>
            </Viewport>
            <LayoutTabs>
              <LayoutNavButton type="button" $first aria-label="上一个布局">
                <svg width="12" height="16"><path d="M11 0V15L3 8z" fill="#6d6d6d" /></svg>
              </LayoutNavButton>
              <LayoutNavButton type="button" aria-label="下一个布局">
                <svg width="12" height="16"><path d="M2 0V15L10 8z" fill="#6d6d6d" /></svg>
              </LayoutNavButton>
              <LayoutTab type="button">
                <TabShape width="87" height="30">
                  <path d="M0 0L15 29.500H72L86 0z" fill="#fff" />
                  <path d="M0 0L15 29.500H72L86 0" fill="none" stroke="#000" />
                </TabShape>
                <TabLabel>模型</TabLabel>
              </LayoutTab>
            </LayoutTabs>
          </Center>

          <SideDock $right>
            <SideToolbar>
              <SideGrip />
              <Tools items={MODIFY_TOOLS} horizontal />
            </SideToolbar>
          </SideDock>
        </Main>

        <Splitter />

        <CommandPanel>
          <History>
            <HistoryText>{"命令:\n  指定对角点:"}</HistoryText>
            <VerticalScroll>
              <ScrollButton type="button" aria-label="向上滚动"><Chevron d="M1 6L4.500 3L8 6" /></ScrollButton>
              <ScrollButton type="button" aria-label="向下滚动"><Chevron d="M1 3L4.500 6L8 3" /></ScrollButton>
            </VerticalScroll>
          </History>
          <CommandRow>
            <CommandInput aria-label="命令" defaultValue="命令:" />
            <HorizontalScroll>
              <ScrollButton type="button" aria-label="向左滚动"><Chevron d="M6 1L3 4.500L6 8" /></ScrollButton>
              <ScrollThumb />
              <ScrollButton type="button" aria-label="向右滚动"><Chevron d="M3 1L6 4.500L3 8" /></ScrollButton>
            </HorizontalScroll>
          </CommandRow>
        </CommandPanel>

        <StatusBar>
          <Coordinates>{"774.967017,  62.869720,  0.000000"}</Coordinates>
          {TOGGLES.map(([label, on]) => (
            <StatusToggle key={label} type="button" $on={on} aria-pressed={on}>{label}</StatusToggle>
          ))}
          <StatusLink href="#feedback">提交软件问题或增加新功能</StatusLink>
          <Brand>
            <Logo size={18} />
            <span><BrandPrefix>CAD</BrandPrefix>.MxCloud</span>
          </Brand>
        </StatusBar>
      </Workspace>
    </Window>
  );
}
